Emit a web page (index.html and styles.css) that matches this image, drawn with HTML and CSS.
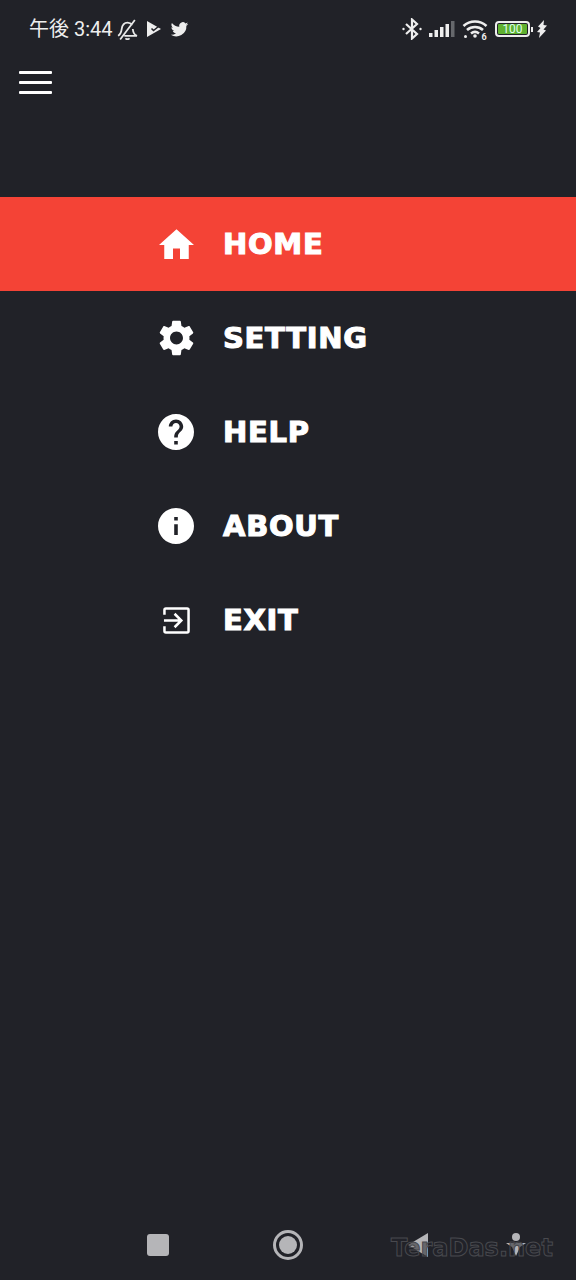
FILE: index.html
```html
<!DOCTYPE html>
<html lang="ja">
<head>
  <meta charset="UTF-8">
  <meta name="viewport" content="width=device-width, initial-scale=1.0">
  <title>Menu</title>
  <link rel="stylesheet" href="styles.css">
</head>
<body>
  <div class="status-bar">
    <div class="status-left">
      <span class="clock">午後 3:44</span>
      <svg class="st-bell" viewBox="0 0 20 20" width="21" height="21" fill="none" stroke="#e8e8e8" stroke-width="1.7">
        <path d="M1 16c2-1 3-3 3.500-6.500C5 6 7 3.500 10 3.500c2 0 3.500 1 4.500 2.500M15 9.500c.3 3 1.500 5.500 4 6.500H7M3 19.500L17 1M8 18.500c1 1 3 1 4 0"/>
      </svg>
      <svg class="st-app" viewBox="0 0 16 16" width="16" height="16">
        <path fill="#eee" d="M1 0l14 8-14 8z"/>
        <path fill="none" stroke="#212228" stroke-width="1.600" d="M5.500 7.500l2 2L15 3.500"/>
      </svg>
      <svg class="st-bird" viewBox="0 0 24 24" width="19" height="19">
        <path fill="#eee" d="M23 5c-.8.4-1.700.6-2.600.7.900-.6 1.600-1.400 2-2.500-.9.500-1.800.9-2.900 1.100A4.500 4.500 0 0 0 11.800 8.500C8 8.300 4.600 6.500 2.400 3.700c-1.200 2.100-.6 4.700 1.400 6-.7 0-1.400-.2-2-.6 0 2.200 1.500 4.100 3.600 4.500-.7.200-1.400.2-2 .1.600 1.800 2.200 3.100 4.200 3.100A9 9 0 0 1 1 18.700 12.800 12.800 0 0 0 20.700 7.300c.9-.6 1.700-1.400 2.300-2.300z"/>
      </svg>
    </div>
    <div class="status-right">
      <svg viewBox="0 0 20 22" width="20" height="22" fill="none" stroke="#eee" stroke-width="2.200">
        <path d="M4 6l11 10-5 4.500V1.500L15 6 4 16"/>
        <circle cx="1.500" cy="11" r="1.200" fill="#eee" stroke="none"/><circle cx="18.500" cy="11" r="1.200" fill="#eee" stroke="none"/>
      </svg>
      <svg viewBox="0 0 26 18" width="26" height="18">
        <rect x="0" y="13" width="3.500" height="4" fill="#eee"/>
        <rect x="5.500" y="10" width="3.500" height="7" fill="#eee"/>
        <rect x="11" y="7" width="3.500" height="10" fill="#eee"/>
        <rect x="16.500" y="4" width="3.500" height="13" fill="#eee"/>
        <rect x="22" y="1" width="3.500" height="16" fill="#66686c"/>
      </svg>
      <svg viewBox="0 0 26 22" width="26" height="22" fill="none" stroke="#eee" stroke-width="2.600">
        <path d="M1.500 8C8 2 18 2 24.500 8M5 12c4.500-4 11.500-4 16 0M9 15.500c2.500-2 5.500-2 8 0"/>
        <circle cx="13" cy="18" r="1.800" fill="#eee" stroke="none"/>
        <circle cx="3.500" cy="18.500" r="1.500" fill="#eee" stroke="none"/>
        <text class="wifi-num" x="19.500" y="21.500">6</text>
      </svg>
      <div class="battery">
        <span class="battery-body"><span class="battery-fill">100</span></span>
        <span class="battery-tip"></span>
      </div>
      <svg class="st-bolt" viewBox="0 0 10 18" width="10" height="18">
        <path fill="#eee" d="M7 0L1 6.500l2.500 1.500L0 12l3 .5L2 18l7-7.500-2.500-1L10 5.500 6.500 5z"/>
      </svg>
    </div>
  </div>

  <div class="toolbar">
    <button class="menu-btn" type="button" aria-label="menu">
      <span></span><span></span><span></span>
    </button>
  </div>

  <ul class="menu">
    <li class="menu-item active">
      <span class="menu-icon">
        <svg viewBox="2 3 20 17" width="35" height="30"><path d="M10 20v-6h4v6h5v-8h3L12 3 2 12h3v8z"/></svg>
      </span>
      <span class="menu-label">HOME</span>
    </li>
    <li class="menu-item">
      <span class="menu-icon">
        <svg viewBox="2.400 2 19.200 20" width="35" height="36"><path d="M19.140 12.940c.04-.3.060-.61.060-.94 0-.32-.02-.64-.07-.94l2.030-1.580c.18-.14.23-.41.120-.61l-1.920-3.320c-.12-.22-.37-.29-.59-.22l-2.390.96c-.5-.38-1.030-.7-1.620-.94l-.36-2.540c-.04-.24-.24-.41-.48-.41h-3.840c-.24 0-.43.170-.47.41l-.36 2.540c-.59.24-1.130.57-1.620.94l-2.390-.96c-.22-.08-.47 0-.59.22L2.740 8.870c-.12.210-.08.470.12.610l2.030 1.580c-.05.3-.09.630-.09.940s.02.640.07.940l-2.030 1.580c-.18.140-.23.410-.12.610l1.920 3.320c.12.220.37.290.59.220l2.390-.96c.5.380 1.030.7 1.620.94l.36 2.540c.05.240.24.410.48.410h3.840c.24 0 .44-.17.470-.41l.36-2.540c.59-.24 1.130-.56 1.620-.94l2.390.96c.22.080.47 0 .59-.22l1.920-3.320c.12-.22.070-.47-.12-.61l-2.010-1.580zM12 15.600c-1.980 0-3.600-1.620-3.600-3.600s1.620-3.600 3.600-3.600 3.600 1.620 3.600 3.600-1.620 3.600-3.600 3.600z"/></svg>
      </span>
      <span class="menu-label">SETTING</span>
    </li>
    <li class="menu-item">
      <span class="menu-icon">
        <svg viewBox="2 2 20 20" width="36" height="36"><path d="M12 2C6.480 2 2 6.480 2 12s4.480 10 10 10 10-4.480 10-10S17.520 2 12 2zm1 17h-2v-2h2v2zm2.070-7.750l-.9.920C13.450 12.900 13 13.500 13 15h-2v-.5c0-1.100.45-2.100 1.170-2.830l1.240-1.260c.37-.36.59-.86.59-1.410 0-1.100-.9-2-2-2s-2 .9-2 2H8c0-2.210 1.790-4 4-4s4 1.790 4 4c0 .88-.36 1.680-.93 2.250z"/></svg>
      </span>
      <span class="menu-label">HELP</span>
    </li>
    <li class="menu-item">
      <span class="menu-icon">
        <svg viewBox="2 2 20 20" width="36" height="36"><path d="M12 2C6.480 2 2 6.480 2 12s4.480 10 10 10 10-4.480 10-10S17.520 2 12 2zm1 15h-2v-6h2v6zm0-8h-2V7h2v2z"/></svg>
      </span>
      <span class="menu-label">ABOUT</span>
    </li>
    <li class="menu-item">
      <span class="menu-icon">
        <svg class="exit-icon" viewBox="0 0 28 28" width="27" height="27" fill="none" stroke="#fff" stroke-width="2.600">
          <path d="M1.500 8V3q0-1.500 1.500-1.500h22q1.500 0 1.500 1.500v22q0 1.500-1.500 1.500H3q-1.500 0-1.500-1.500v-5"/>
          <path d="M1 14h17M12 7l7 7-7 7"/>
        </svg>
      </span>
      <span class="menu-label">EXIT</span>
    </li>
  </ul>

  <div class="nav-bar">
    <span class="nav-square"></span>
    <span class="nav-circle"><span class="nav-dot"></span></span>
    <svg class="nav-back" viewBox="0 0 20 24" width="20" height="24"><path fill="#b5b5b8" d="M20 0v24L0 12z"/></svg>
    <svg class="nav-person" viewBox="0 0 20 24" width="20" height="24">
      <circle cx="10" cy="4" r="4" fill="#b5b5b8"/>
      <path fill="#b5b5b8" d="M0 10h20l-6 4-4 9-4-9z"/>
    </svg>
    <span class="watermark">TeraDas.net</span>
  </div>
</body>
</html>
```

FILE: styles.css
```css
body {
  margin: 0;
  height: 1280px;
  overflow: hidden;
  position: relative;
  display: flex;
  flex-direction: column;
  background-color: #212228;
  color: #fff;
  font-family: Roboto, "Noto Sans CJK JP", sans-serif;
}

.status-bar {
  height: 58px;
  padding: 0 29px;
  display: flex;
  justify-content: space-between;
  align-items: center;
  color: #eee;
}

.status-left,
.status-right {
  display: flex;
  align-items: center;
}

.clock {
  font-size: 20px;
  line-height: 24px;
  margin-right: 4px;
}

.st-app {
  margin-left: 8px;
}

.st-bird {
  margin-left: 8px;
}

.status-right {
  gap: 7px;
}

.wifi-num {
  font-family: Roboto, sans-serif;
  font-size: 9px;
  font-weight: 700;
  fill: #eee;
  stroke: none;
}

.battery {
  display: flex;
  align-items: center;
}

.battery-body {
  display: block;
  width: 29px;
  height: 10px;
  padding: 1px;
  border: 2px solid #eee;
  border-radius: 4px;
}

.battery-fill {
  display: block;
  height: 10px;
  background-color: #5fb130;
  border-radius: 1px;
  color: #dfe;
  font-size: 12px;
  line-height: 10px;
  text-align: center;
}

.battery-tip {
  width: 2px;
  height: 5px;
  margin-left: 1px;
  background-color: #eee;
}

.st-bolt {
  margin-left: -3px;
}

.toolbar {
  height: 139px;
  padding: 13px 0 0 19px;
  box-sizing: border-box;
}

.menu-btn {
  display: flex;
  flex-direction: column;
  gap: 7px;
  width: 33px;
  padding: 0;
  border: none;
  background: none;
}

.menu-btn span {
  display: block;
  width: 33px;
  height: 3px;
  background-color: #fff;
  border-radius: 1px;
}

.menu {
  list-style: none;
  margin: 0;
  padding: 0;
}

.menu-item {
  height: 94px;
  padding-left: 158px;
  display: flex;
  align-items: center;
}

.menu-item.active {
  background-color: #f44336;
}

.menu-icon {
  width: 36px;
  height: 36px;
  margin-right: 29px;
  display: flex;
  align-items: center;
  justify-content: center;
}

.menu-icon svg {
  fill: #fff;
}

.menu-icon .exit-icon {
  fill: none;
}

.menu-label {
  font-family: "DejaVu Sans", sans-serif;
  font-size: 29px;
  font-weight: 700;
  line-height: 36px;
  letter-spacing: 0.7px;
  color: #fff;
  -webkit-text-stroke: 1.1px #fff;
}

.nav-bar {
  margin-top: auto;
  height: 70px;
  padding-left: 147px;
  display: flex;
  align-items: center;
  gap: 104px;
}

.nav-square {
  width: 22px;
  height: 22px;
  background-color: #b5b5b8;
  border-radius: 3px;
}

.nav-circle {
  width: 24px;
  height: 24px;
  border: 3px solid #b5b5b8;
  border-radius: 50%;
  display: flex;
  align-items: center;
  justify-content: center;
}

.nav-dot {
  width: 18px;
  height: 18px;
  background-color: #b5b5b8;
  border-radius: 50%;
}

.nav-back {
  margin-left: 1px;
}

.nav-person {
  margin-left: -26px;
}

.watermark {
  position: absolute;
  left: 391px;
  bottom: 17px;
  font-family: "DejaVu Sans", sans-serif;
  font-size: 24px;
  font-weight: 700;
  line-height: 30px;
  color: rgba(34, 35, 42, 0.55);
  -webkit-text-stroke: 1px #48494e;
}
```
